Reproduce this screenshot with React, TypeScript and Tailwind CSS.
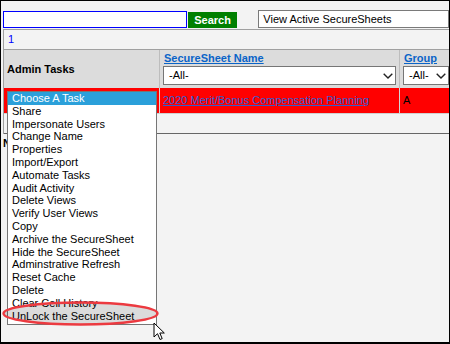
const tasks = [
  'Choose A Task',
  'Share',
  'Impersonate Users',
  'Change Name',
  'Properties',
  'Import/Export',
  'Automate Tasks',
  'Audit Activity',
  'Delete Views',
  'Verify User Views',
  'Copy',
  'Archive the SecureSheet',
  'Hide the SecureSheet',
  'Adminstrative Refresh',
  'Reset Cache',
  'Delete',
  'Clear Cell History',
  'UnLock the SecureSheet',
];

function Chevron() {
  return (
    <svg className="w-[10px] h-[6px]" viewBox="0 0 10 6" fill="none">
      <path d="M0.7 0.7 L5 5 L9.3 0.7" stroke="#222" strokeWidth="1.4" />
    </svg>
  );
}

function FakeSelect({ label, className }: { label: string; className: string }) {
  return (
    <div
      className={`flex items-center justify-between bg-white border border-[#767676] pl-[5px] pr-[2px] ${className}`}
    >
      <span className="text-black">{label}</span>
      <Chevron />
    </div>
  );
}

export default function App() {
  return (
    <div className="relative w-[450px] h-[344px] overflow-hidden bg-[#f3f3f3] border-l border-t border-r border-b-2 border-black font-['Liberation_Sans',Arial,sans-serif] text-[11px] leading-[13px]">
      {/* search bar */}
      <div className="flex items-end pt-[9px] pl-[2px]">
        <div className="w-[193px] h-[17px] bg-white border border-[#0000ff]" />
        <button className="ml-[1px] w-[52px] h-[16px] bg-[#008000] text-white font-bold">
          Search
        </button>
        <div className="ml-[21px] w-[200px] h-[18px] bg-white border border-[#7a7a7a] flex items-center pl-[4px] text-black">
          View Active SecureSheets
        </div>
      </div>

      {/* table */}
      <div className="mt-[1px] ml-[2px] w-[480px] border-t border-l border-[#a0a0a0]">
        <div className="h-[20px] flex items-center pl-[4px] border-b border-[#a0a0a0] text-[#0000ff]">
          1
        </div>

        <div className="flex h-[38px] bg-[#dcdcdc]">
          <div className="w-[156px] border-r border-[#bdbdbd] flex items-center pl-[3px] font-bold text-black">
            Admin Tasks
          </div>
          <div className="w-[240px] border-r border-[#bdbdbd] pt-[2px] pl-[3px]">
            <div className="pl-[1px] font-bold text-[#0a64c8] underline">SecureSheet Name</div>
            <FakeSelect label="-All-" className="mt-[1px] w-[233px] h-[19px]" />
          </div>
          <div className="flex-1 pt-[2px] pl-[3px]">
            <div className="pl-[1px] font-bold text-[#0a64c8] underline">Group</div>
            <FakeSelect label="-All-" className="mt-[1px] w-[46px] h-[19px] pl-[4px]" />
          </div>
        </div>

        <div className="flex h-[26px] bg-[#ff0000] border-b border-[#d0d0d0]">
          <div className="w-[156px] border-r border-[#d3d3d3]" />
          <div className="w-[240px] border-r border-[#d3d3d3] flex items-center pl-[3px]">
            <span className="text-[#2d5fd2] underline">2020 Merit/Bonus Compensation Planning</span>
          </div>
          <div className="flex-1 flex items-center pl-[3px] text-black">A</div>
        </div>

        <div className="h-[20px] border-b border-[#666666]" />
      </div>

      {/* only the edge of this line shows beside the open list */}
      <div className="ml-[2px] mt-[3px] w-[4px] overflow-hidden font-bold text-black">N</div>

      {/* open task list */}
      <div className="absolute left-[6px] top-[90px] w-[150px] h-[234px] bg-white border border-[#767676] text-black">
        {tasks.map((t, i) => (
          <div
            key={t}
            className={`h-[12.8px] leading-[12.8px] pl-[4px] whitespace-nowrap ${
              i === 0 ? 'bg-[#2ba0da] text-white' : ''
            }`}
          >
            {t}
          </div>
        ))}
      </div>

      {/* highlight ring */}
      <svg className="absolute left-[1px] top-[300px] w-[158px] h-[25px]" viewBox="0 0 158 25">
        <ellipse
          cx="78.5"
          cy="12.5"
          rx="77"
          ry="11"
          fill="rgba(0,0,0,0.14)"
          stroke="#ec3a40"
          strokeWidth="2.4"
        />
      </svg>

      {/* cursor */}
      <svg className="absolute left-[152px] top-[321px] w-[13px] h-[19px]" viewBox="0 0 13 19">
        <path
          d="M1 1 L1 15 L4.5 11.7 L7 17.5 L9.2 16.6 L6.8 11 L11.3 11 Z"
          fill="white"
          stroke="black"
          strokeWidth="1"
          strokeLinejoin="round"
        />
      </svg>
    </div>
  );
}
